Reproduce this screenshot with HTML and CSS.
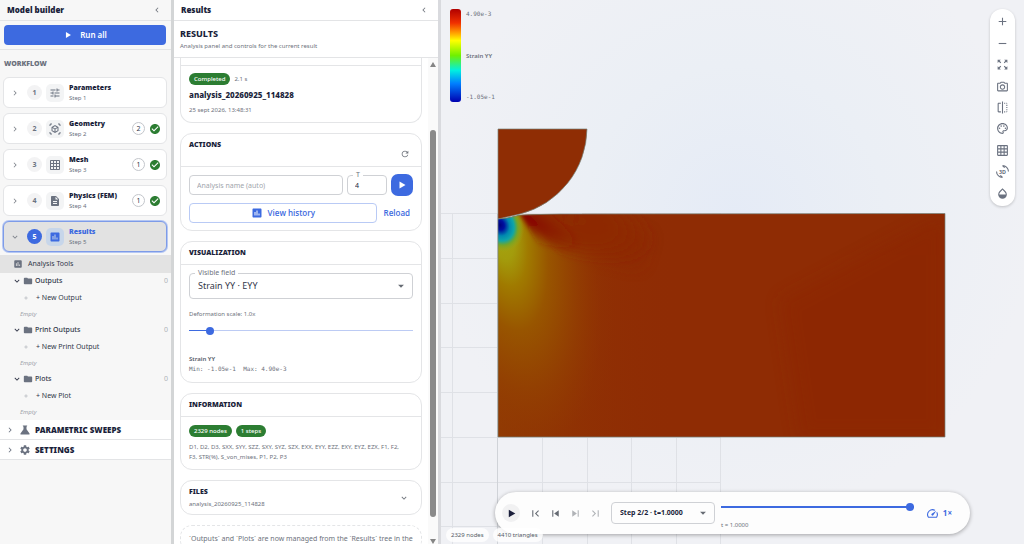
FILE: index.html
```html
<!DOCTYPE html>
<html lang="en">
<head>
<meta charset="utf-8">
<title>Model builder</title>
<link rel="stylesheet" href="styles.css">
</head>
<body>
<svg class="sprite" aria-hidden="true">
<symbol id="play" viewBox="0 0 24 24"><path d="M7 5v14l12-7z"/></symbol>
<symbol id="left" viewBox="0 0 24 24"><path d="M15.4 7.4 14 6l-6 6 6 6 1.4-1.4L10.8 12z"/></symbol>
<symbol id="right" viewBox="0 0 24 24"><path d="M10 6 8.6 7.4l4.6 4.6-4.6 4.6L10 18l6-6z"/></symbol>
<symbol id="down" viewBox="0 0 24 24"><path d="M16.6 8.6 12 13.2 7.4 8.6 6 10l6 6 6-6z"/></symbol>
<symbol id="caret" viewBox="0 0 24 24"><path d="m5 9 7 7 7-7z"/></symbol>
<symbol id="tune" viewBox="0 0 24 24"><path d="M3 17v2h6v-2H3zM3 5v2h10V5H3zm10 16v-2h8v-2h-8v-2h-2v6h2zM7 9v2H3v2h4v2h2V9H7zm14 4v-2H11v2h10zm-6-4h2V7h4V5h-4V3h-2v6z"/></symbol>
<symbol id="cube" viewBox="0 0 24 24"><path d="M3 4c0-.55.45-1 1-1h2V1H4C2.34 1 1 2.34 1 4v2h2V4zm0 16v-2H1v2c0 1.66 1.34 3 3 3h2v-2H4c-.55 0-1-.45-1-1zM20 1h-2v2h2c.55 0 1 .45 1 1v2h2V4c0-1.66-1.34-3-3-3zm1 19c0 .55-.45 1-1 1h-2v2h2c1.66 0 3-1.34 3-3v-2h-2v2zm-2-5.13V9.13c0-.72-.38-1.38-1-1.73l-5-2.88c-.31-.18-.65-.27-1-.27s-.69.09-1 .27L6 7.39c-.62.36-1 1.02-1 1.74v5.74c0 .72.38 1.38 1 1.73l5 2.88c.31.18.65.27 1 .27s.69-.09 1-.27l5-2.88c.62-.35 1-1.01 1-1.73zm-8 2.3l-4-2.3v-4.63l4 2.33v4.6zm1-6.33L8.04 8.53 12 6.25l3.96 2.28L12 10.84zm5 4.03l-4 2.3v-4.6l4-2.33v4.63z"/></symbol>
<symbol id="grid" viewBox="0 0 24 24"><path d="M20 2H4c-1.1 0-2 .9-2 2v16c0 1.1.9 2 2 2h16c1.1 0 2-.9 2-2V4c0-1.1-.9-2-2-2zM8 20H4v-4h4v4zm0-6H4v-4h4v4zm0-6H4V4h4v4zm6 12h-4v-4h4v4zm0-6h-4v-4h4v4zm0-6h-4V4h4v4zm6 12h-4v-4h4v4zm0-6h-4v-4h4v4zm0-6h-4V4h4v4z"/></symbol>
<symbol id="doc" viewBox="0 0 24 24"><path d="M14 2H6c-1.1 0-2 .9-2 2v16c0 1.1.9 2 2 2h12c1.1 0 2-.9 2-2V8l-6-6zm2 16H8v-2h8v2zm0-4H8v-2h8v2zm-3-5V3.5L18.5 9H13z"/></symbol>
<symbol id="chart" viewBox="0 0 24 24"><path d="M19 3H5c-1.1 0-2 .9-2 2v14c0 1.1.9 2 2 2h14c1.1 0 2-.9 2-2V5c0-1.1-.9-2-2-2zM9 17H7v-7h2v7zm4 0h-2V7h2v10zm4 0h-2v-4h2v4z"/></symbol>
<symbol id="check" viewBox="0 0 24 24"><path d="M12 2C6.48 2 2 6.48 2 12s4.48 10 10 10 10-4.48 10-10S17.52 2 12 2zm-2 15l-5-5 1.41-1.41L10 14.17l7.59-7.59L19 8l-9 9z"/></symbol>
<symbol id="folder" viewBox="0 0 24 24"><path d="M10 4H4c-1.1 0-2 .9-2 2v12c0 1.1.9 2 2 2h16c1.1 0 2-.9 2-2V8c0-1.1-.9-2-2-2h-8l-2-2z"/></symbol>
<symbol id="flask" viewBox="0 0 24 24"><path d="M16 3H8c-.5 0-.7.5-.4.8L9 5.5v5.2L3 19c-.6.9 0 2 1 2h16c1 0 1.6-1.1 1-2l-6-8.3V5.5l1.4-1.7c.3-.3.1-.8-.4-.8z"/></symbol>
<symbol id="gear" viewBox="0 0 24 24"><path d="M19.14 12.94c.04-.3.06-.61.06-.94 0-.32-.02-.64-.07-.94l2.03-1.58c.18-.14.23-.41.12-.61l-1.92-3.32c-.12-.22-.37-.29-.59-.22l-2.39.96c-.5-.38-1.03-.7-1.62-.94l-.36-2.54c-.04-.24-.24-.41-.48-.41h-3.84c-.24 0-.43.17-.47.41l-.36 2.54c-.59.24-1.13.57-1.62.94l-2.39-.96c-.22-.08-.47 0-.59.22L2.74 8.87c-.12.21-.08.47.12.61l2.03 1.58c-.05.3-.09.63-.09.94s.02.64.07.94l-2.03 1.58c-.18.14-.23.41-.12.61l1.92 3.32c.12.22.37.29.59.22l2.39-.96c.5.38 1.03.7 1.62.94l.36 2.54c.05.24.24.41.48.41h3.84c.24 0 .44-.17.47-.41l.36-2.54c.59-.24 1.13-.56 1.62-.94l2.39.96c.22.08.47 0 .59-.22l1.92-3.32c.12-.22.07-.47-.12-.61l-2.01-1.58zM12 15.6c-1.98 0-3.6-1.62-3.6-3.6s1.62-3.6 3.6-3.6 3.6 1.62 3.6 3.6-1.62 3.6-3.6 3.6z"/></symbol>
<symbol id="refresh" viewBox="0 0 24 24"><path d="M17.65 6.35C16.2 4.9 14.21 4 12 4c-4.42 0-8 3.58-8 8s3.58 8 8 8c3.73 0 6.84-2.55 7.73-6h-2.08c-.82 2.33-3.04 4-5.65 4-3.31 0-6-2.69-6-6s2.69-6 6-6c1.66 0 3.14.69 4.22 1.78L13 11h7V4l-2.35 2.35z"/></symbol>
<symbol id="plus" viewBox="0 0 24 24"><path d="M19 13h-6v6h-2v-6H5v-2h6V5h2v6h6z"/></symbol>
<symbol id="minus" viewBox="0 0 24 24"><path d="M5 11h14v2H5z"/></symbol>
<symbol id="expand" viewBox="0 0 24 24"><path d="M15 3l2.3 2.3-2.89 2.87 1.42 1.42L18.7 6.7 21 9V3h-6zM3 9l2.3-2.3 2.87 2.89 1.42-1.42L6.7 5.3 9 3H3v6zm6 12l-2.3-2.3 2.89-2.87-1.42-1.42L5.3 17.3 3 15v6h6zm12-6l-2.3 2.3-2.87-2.89-1.42 1.42 2.89 2.87L15 21h6v-6z"/></symbol>
<symbol id="camera" viewBox="0 0 24 24"><path d="M20 5h-3.17L15 3H9L7.17 5H4c-1.1 0-2 .9-2 2v12c0 1.1.9 2 2 2h16c1.1 0 2-.9 2-2V7c0-1.1-.9-2-2-2zm0 14H4V7h4.05l1.83-2h4.24l1.83 2H20v12zM12 8c-2.76 0-5 2.24-5 5s2.24 5 5 5 5-2.24 5-5-2.24-5-5-5zm0 8c-1.65 0-3-1.35-3-3s1.35-3 3-3 3 1.35 3 3-1.35 3-3 3z"/></symbol>
<symbol id="flip" viewBox="0 0 24 24"><path d="M15 21h2v-2h-2v2zm4-12h2V7h-2v2zM3 5v14c0 1.1.9 2 2 2h4v-2H5V5h4V3H5c-1.1 0-2 .9-2 2zm16-2v2h2c0-1.1-.9-2-2-2zm-8 20h2V1h-2v22zm8-6h2v-2h-2v2zM15 5h2V3h-2v2zm4 8h2v-2h-2v2zm0 8c1.1 0 2-.9 2-2h-2v2z"/></symbol>
<symbol id="palette" viewBox="0 0 24 24"><path d="M12 22C6.49 22 2 17.51 2 12S6.49 2 12 2s10 4.04 10 9c0 3.31-2.69 6-6 6h-1.77c-.28 0-.5.22-.5.5 0 .12.05.23.13.33.41.47.64 1.06.64 1.67 0 1.38-1.12 2.5-2.5 2.5zm0-18c-4.41 0-8 3.59-8 8s3.59 8 8 8c.28 0 .5-.22.5-.5 0-.16-.08-.28-.14-.35-.41-.46-.63-1.05-.63-1.65 0-1.38 1.12-2.5 2.5-2.5H16c2.21 0 4-1.79 4-4 0-3.86-3.59-7-8-7z"/><circle cx="6.5" cy="11.5" r="1.5"/><circle cx="9.5" cy="7.5" r="1.5"/><circle cx="14.5" cy="7.5" r="1.5"/><circle cx="17.5" cy="11.5" r="1.5"/></symbol>
<symbol id="drop" viewBox="0 0 24 24"><path d="M17.66 8L12 2.35 6.34 8C4.78 9.56 4 11.64 4 13.64s.78 4.11 2.34 5.67 3.61 2.35 5.66 2.35 4.1-.79 5.66-2.35S20 15.64 20 13.64 19.22 9.56 17.66 8zM6 14c.01-2 .62-3.27 1.76-4.4L12 5.27l4.24 4.38C17.38 10.77 17.99 12 18 14H6z"/></symbol>
<symbol id="first" viewBox="0 0 24 24"><path d="M18.4 16.6 13.8 12l4.6-4.6L17 6l-6 6 6 6zM6 6h2v12H6z"/></symbol>
<symbol id="prev" viewBox="0 0 24 24"><path d="M6 6h2v12H6zm3.5 6 8.5 6V6z"/></symbol>
<symbol id="next" viewBox="0 0 24 24"><path d="m6 18 8.5-6L6 6zM16 6v12h2V6z"/></symbol>
<symbol id="last" viewBox="0 0 24 24"><path d="M5.6 7.4 10.2 12l-4.6 4.6L7 18l6-6-6-6zM16 6h2v12h-2z"/></symbol>
<symbol id="speed" viewBox="0 0 24 24"><path d="M20.38 8.57l-1.23 1.85a8 8 0 0 1-.22 7.58H5.07A8 8 0 0 1 15.58 6.85l1.85-1.23A10 10 0 0 0 3.35 19a2 2 0 0 0 1.72 1h13.85a2 2 0 0 0 1.74-1 10 10 0 0 0-.27-10.44zm-9.79 6.84a2 2 0 0 0 2.83 0l5.66-8.49-8.49 5.66a2 2 0 0 0 0 2.83z"/></symbol>
</svg>

<div class="app">
<aside class="builder">
  <header class="panel-head"><h1>Model builder</h1><button class="plain" aria-label="Collapse builder"><svg class="icon"><use href="#left"/></svg></button></header>
  <div class="run-wrap"><button class="run"><svg class="icon"><use href="#play"/></svg>Run all</button></div>
  <h2 class="caption">WORKFLOW</h2>
  <nav class="steps" aria-label="Workflow">
    <button class="step"><svg class="icon chev"><use href="#right"/></svg><span class="num">1</span><span class="tile"><svg class="icon big"><use href="#tune"/></svg></span><span class="name"><b>Parameters</b><small>Step 1</small></span></button>
    <button class="step"><svg class="icon chev"><use href="#right"/></svg><span class="num">2</span><span class="tile"><svg class="icon big"><use href="#cube"/></svg></span><span class="name"><b>Geometry</b><small>Step 2</small></span><span class="count">2</span><svg class="icon big ok"><use href="#check"/></svg></button>
    <button class="step"><svg class="icon chev"><use href="#right"/></svg><span class="num">3</span><span class="tile"><svg class="icon big"><use href="#grid"/></svg></span><span class="name"><b>Mesh</b><small>Step 3</small></span><span class="count">1</span><svg class="icon big ok"><use href="#check"/></svg></button>
    <button class="step"><svg class="icon chev"><use href="#right"/></svg><span class="num">4</span><span class="tile"><svg class="icon big"><use href="#doc"/></svg></span><span class="name"><b>Physics (FEM)</b><small>Step 4</small></span><span class="count">1</span><svg class="icon big ok"><use href="#check"/></svg></button>
    <button class="step active"><svg class="icon chev"><use href="#down"/></svg><span class="num">5</span><span class="tile"><svg class="icon big"><use href="#chart"/></svg></span><span class="name"><b>Results</b><small>Step 5</small></span></button>
  </nav>
  <div class="tree">
    <button class="tool"><svg class="icon"><use href="#chart"/></svg>Analysis Tools</button>
    <button class="branch"><svg class="icon"><use href="#down"/></svg><svg class="icon fold"><use href="#folder"/></svg><span>Outputs</span><i>0</i></button>
    <button class="leaf"><svg class="icon"><use href="#plus"/></svg>+ New Output</button>
    <p class="empty">Empty</p>
    <button class="branch"><svg class="icon"><use href="#down"/></svg><svg class="icon fold"><use href="#folder"/></svg><span>Print Outputs</span><i>0</i></button>
    <button class="leaf"><svg class="icon"><use href="#plus"/></svg>+ New Print Output</button>
    <p class="empty">Empty</p>
    <button class="branch"><svg class="icon"><use href="#down"/></svg><svg class="icon fold"><use href="#folder"/></svg><span>Plots</span><i>0</i></button>
    <button class="leaf"><svg class="icon"><use href="#plus"/></svg>+ New Plot</button>
    <p class="empty">Empty</p>
  </div>
  <button class="section"><svg class="icon"><use href="#right"/></svg><svg class="icon big"><use href="#flask"/></svg>PARAMETRIC SWEEPS</button>
  <button class="section"><svg class="icon"><use href="#right"/></svg><svg class="icon big"><use href="#gear"/></svg>SETTINGS</button>
</aside>

<section class="results">
  <header class="panel-head"><h1>Results</h1><button class="plain" aria-label="Collapse results"><svg class="icon"><use href="#left"/></svg></button></header>
  <div class="intro"><h2>RESULTS</h2><p>Analysis panel and controls for the current result</p></div>
  <div class="scroller">
    <div class="cards">
      <article class="card summary">
        <div class="body"><div class="chips"><span class="chip">Completed</span><small>2.1 s</small></div>
        <h3>analysis_20260925_114828</h3><p>25 sept 2026, 13:48:31</p></div>
      </article>
      <article class="card actions">
        <header><h3>ACTIONS</h3><button class="plain" aria-label="Refresh"><svg class="icon"><use href="#refresh"/></svg></button></header>
        <div class="body">
          <div class="row"><input class="field" aria-label="Analysis name" placeholder="Analysis name (auto)">
            <div class="outlined threads"><label for="threads">T</label><input id="threads" class="field" value="4"></div>
            <button class="go" aria-label="Run analysis"><svg class="icon big"><use href="#play"/></svg></button></div>
          <div class="row"><button class="history"><svg class="icon big"><use href="#chart"/></svg>View history</button><button class="reload">Reload</button></div>
        </div>
      </article>
      <article class="card visual">
        <header><h3>VISUALIZATION</h3></header>
        <div class="body">
          <div class="outlined"><label for="visible">Visible field</label><select id="visible"><option>Strain YY · EYY</option></select><svg class="icon arrow"><use href="#caret"/></svg></div>
          <label class="scale" for="deform">Deformation scale: 1.0x</label>
          <input id="deform" class="slider deform" type="range" min="0" max="100" value="8">
          <p class="strong">Strain YY</p><p class="mono">Min: -1.05e-1&nbsp; Max: 4.90e-3</p>
        </div>
      </article>
      <article class="card info">
        <header><h3>INFORMATION</h3></header>
        <div class="body"><div class="chips"><span class="chip">2329 nodes</span><span class="chip">1 steps</span></div>
        <p>D1, D2, D3, SXX, SYY, SZZ, SXY, SYZ, SZX, EXX, EYY, EZZ, EXY, EYZ, EZX, F1, F2, F3, STR(%), S_von_mises, P1, P2, P3</p></div>
      </article>
      <article class="card files"><div><h3>FILES</h3><p>analysis_20260925_114828</p></div><button class="plain" aria-label="Show files"><svg class="icon"><use href="#down"/></svg></button></article>
      <article class="card note"><p>`Outputs` and `Plots` are now managed from the `Results` tree in the</p></article>
    </div>
    <div class="scrollbar" aria-hidden="true"><i class="up"></i><i class="thumb"></i><i class="dn"></i></div>
  </div>
</section>

<main class="viewport">
  <svg class="canvas" viewBox="441 0 583 544" preserveAspectRatio="xMinYMin slice" role="img" aria-label="Strain YY on deformed mesh">
    <defs>
      <radialGradient id="sky" gradientUnits="userSpaceOnUse" cx="735" cy="215" r="300"><stop offset="0" stop-color="#e5ebf6"/><stop offset=".5" stop-color="#ebeff5"/><stop offset="1" stop-color="#f0f1f5"/></radialGradient>
      <radialGradient id="plume" gradientUnits="userSpaceOnUse" cx="0" cy="0" r="1" gradientTransform="translate(500 226) rotate(-12) scale(115 280)"><stop offset="0" stop-color="#a5a812"/><stop offset=".12" stop-color="#a39c0c"/><stop offset=".22" stop-color="#a07a00"/><stop offset=".38" stop-color="#985500"/><stop offset=".6" stop-color="#934002" stop-opacity=".85"/><stop offset=".8" stop-color="#903203" stop-opacity=".5"/><stop offset="1" stop-color="#8f2c04" stop-opacity="0"/></radialGradient>
      <radialGradient id="core" gradientUnits="userSpaceOnUse" cx="0" cy="0" r="1" gradientTransform="translate(500 225) rotate(-25) scale(23 28)"><stop offset="0" stop-color="#00007f"/><stop offset=".18" stop-color="#0010a0"/><stop offset=".4" stop-color="#0088b0"/><stop offset=".58" stop-color="#10a5a8"/><stop offset=".74" stop-color="#72a52a"/><stop offset="1" stop-color="#a0a512" stop-opacity="0"/></radialGradient>
      <radialGradient id="hot" gradientUnits="userSpaceOnUse" cx="0" cy="0" r="1" gradientTransform="translate(524 218) rotate(28) scale(66 20)"><stop offset="0" stop-color="#850000"/><stop offset=".3" stop-color="#880a04" stop-opacity=".8"/><stop offset="1" stop-color="#8b1e05" stop-opacity="0"/></radialGradient>
      <linearGradient id="warm" x1="0" x2="1"><stop offset="0" stop-color="#924203"/><stop offset=".3" stop-color="#903403" stop-opacity=".7"/><stop offset=".7" stop-color="#8f2c04" stop-opacity="0"/></linearGradient>
      <radialGradient id="shade" gradientUnits="userSpaceOnUse" cx="0" cy="0" r="1" gradientTransform="translate(570 218) rotate(18) scale(90 40)"><stop offset="0" stop-color="#8e2904"/><stop offset=".5" stop-color="#8e2904" stop-opacity=".9"/><stop offset="1" stop-color="#8e2a04" stop-opacity="0"/></radialGradient>
      <clipPath id="block"><path d="M498 219Q510 218 520 215L560 214 945 213.5V437H498z"/></clipPath>
      <filter id="soft"><feGaussianBlur stdDeviation="8"/></filter>
      <filter id="edge"><feGaussianBlur stdDeviation="2"/></filter>
    </defs>
    <rect x="441" width="2000" height="2000" fill="url(#sky)"/>
    <path class="lines" d="M441 213.5H721M441 258.5H721M441 303.5H721M441 347.5H721M441 392.5H721M441 437.5H721M441 482.5H721M441 526.5H721M452.5 214V544M542.5 214V544M587.5 214V544M631.5 214V544M676.5 214V544M720.5 214V544"/>
    <path class="lines axis" d="M497.5 214V544"/>
    <path d="M498 129H587A89 89 0 0 1 520 214L498 219z" fill="#8f2d04" stroke="#77837a" stroke-width=".7"/>
    <g clip-path="url(#block)">
      <rect x="498" y="213" width="447" height="225" fill="#8f2c04"/>
      <rect x="498" y="213" width="260" height="225" fill="url(#warm)"/>
      <path d="M540 205 650 235 640 268 552 246zM945 213 780 300 800 438H945z" fill="#8c2405" opacity=".4" filter="url(#soft)"/>
      <rect x="498" y="213" width="260" height="225" fill="url(#plume)"/>
      <rect x="498" y="213" width="100" height="60" fill="url(#core)"/>
      <path d="M519 208H700V300H600z" fill="url(#shade)" filter="url(#edge)"/>
      <path d="M519 212H620V300H570z" fill="url(#hot)" filter="url(#edge)"/>
    </g>
    <path d="M498 219Q510 218 520 215L560 214 945 213.5V437H498z" fill="none" stroke="#77837a" stroke-width=".7"/>
  </svg>
  <div class="legend"><i></i><div><span>4.90e-3</span><b>Strain YY</b><span>-1.05e-1</span></div></div>
  <div class="toolbar" role="toolbar" aria-label="View tools">
    <button aria-label="Zoom in"><svg class="icon tool-icon"><use href="#plus"/></svg></button>
    <button aria-label="Zoom out"><svg class="icon tool-icon"><use href="#minus"/></svg></button>
    <button aria-label="Fit"><svg class="icon tool-icon"><use href="#expand"/></svg></button>
    <button aria-label="Capture"><svg class="icon tool-icon"><use href="#camera"/></svg></button>
    <button aria-label="Mirror"><svg class="icon tool-icon"><use href="#flip"/></svg></button>
    <button aria-label="Colours"><svg class="icon tool-icon"><use href="#palette"/></svg></button>
    <button aria-label="Grid"><svg class="icon tool-icon"><use href="#grid"/></svg></button>
    <button aria-label="Rotate"><svg class="icon tool-icon" viewBox="0 0 24 24"><path d="M12 1a11 11 0 0 1 11 11M12 23A11 11 0 0 1 1 12M12 1l4 4M12 23l-4-4" fill="none" stroke="currentColor" stroke-width="2"/><text x="12" y="16" class="glyph3d">3D</text></svg></button>
    <button aria-label="Opacity"><svg class="icon tool-icon"><use href="#drop"/></svg></button>
  </div>
  <div class="player">
    <button class="round" aria-label="Play"><svg class="icon tool-icon"><use href="#play"/></svg></button>
    <div class="skips"><button aria-label="First"><svg class="icon tool-icon"><use href="#first"/></svg></button><button aria-label="Previous"><svg class="icon tool-icon"><use href="#prev"/></svg></button><button aria-label="Next" disabled><svg class="icon tool-icon"><use href="#next"/></svg></button><button aria-label="Last" disabled><svg class="icon tool-icon"><use href="#last"/></svg></button></div>
    <div class="outlined step-pick"><select aria-label="Step"><option>Step 2/2 · t=1.0000</option></select><svg class="icon arrow"><use href="#caret"/></svg></div>
    <div class="timeline"><input id="time" class="slider time" type="range" min="0" max="100" value="100"><label for="time">t = 1.0000</label></div>
    <button class="rate"><svg class="icon tool-icon"><use href="#speed"/></svg>1×</button>
  </div>
  <div class="stats"><span>2329 nodes</span><span>4410 triangles</span></div>
</main>
</div>
</body>
</html>
```
FILE: styles.css
```css
* { box-sizing: border-box; margin: 0; padding: 0; }
body { font: 7px/10px "Noto Sans", "Open Sans", sans-serif; color: #1b1f3b; overflow: hidden; }
button, input, select { font: inherit; color: inherit; background: none; border: 0; min-width: 0; }
button { display: flex; align-items: center; text-align: left; white-space: nowrap; cursor: pointer; }
.sprite { position: absolute; width: 0; height: 0; }
.icon { width: 10px; height: 10px; flex: none; fill: currentColor; }
.big { width: 12px; height: 12px; }
.tool-icon { width: 13px; height: 13px; }
.glyph3d { font: 700 10px "Noto Sans", sans-serif; text-anchor: middle; }
.app { display: grid; grid-template-columns: 174px 267px 1fr; height: 100vh; }

.builder { background: #f7f7f7; border-right: 3px solid #d3d5d6; overflow: hidden; }
.panel-head { display: flex; align-items: center; justify-content: space-between; height: 21px; padding: 0 9px 0 7px; border-bottom: 1px solid #e3e4e6; }
h1 { font-size: 8px; line-height: 12px; font-weight: 900; }
.plain { color: #70757d; }
.run-wrap { padding: 4px 5px 4px 4px; border-bottom: 1px solid #e3e4e6; }
.run { width: 100%; height: 20px; justify-content: center; gap: 7px; color: #fff; background: #3d6ae0; border-radius: 4px; font-size: 8px; font-weight: 600; }
.caption { padding: 9px 4px 8px; font-size: 7px; line-height: 10px; font-weight: 900; color: #6a707c; }
.steps { display: grid; gap: 5px; padding: 0 4px 0 3px; }
.step { height: 31px; padding: 0 5px; border: 1px solid #e4e5e7; border-radius: 6px; background: #fff; color: #6b7280; }
.chev { color: #80858d; margin-right: 7px; margin-left: 1px; }
.num { width: 15px; height: 15px; border-radius: 50%; background: #f3f3f4; text-align: center; line-height: 15px; font-weight: 700; margin-right: 4px; }
.tile { display: grid; place-items: center; width: 18px; height: 18px; border-radius: 5px; background: #f3f4f5; margin-right: 5px; }
.name { flex: 1; display: grid; }
.name b { font-weight: 900; color: #1b1f3b; }
.name small { font-size: 6px; }
.count { width: 13px; height: 13px; border: 1px solid #c3c6cb; border-radius: 50%; text-align: center; line-height: 11px; color: #30354a; margin-right: 4px; }
.ok { color: #2c7d32; }
.active { background: #e2e2e2; border-color: #7d9be8; box-shadow: 0 0 0 1px #b5c7f3; }
.active .num { background: #3d6ae0; color: #fff; }
.active .tile { background: #c7d6ea; color: #3d6ae0; }
.active .name b { color: #3d6ae0; }
.tree { padding-top: 3px; color: #323749; }
.tool, .branch, .leaf { width: 100%; }
.tool { height: 18px; padding-left: 13px; gap: 5px; background: #e3e3e3; }
.tool .icon { color: #6b7280; }
.branch { height: 16px; padding: 0 3px 0 12px; font-weight: 500; gap: 1px; }
.branch span { flex: 1; padding-left: 1px; }
.branch i { font-style: normal; color: #aeb2b8; font-weight: 400; }
.fold { color: #6b7280; }
.leaf { height: 17px; padding-left: 23px; gap: 7px; }
.leaf .icon { width: 6px; height: 6px; color: #9da2aa; }
.empty { height: 16px; line-height: 16px; padding-left: 20px; font-size: 6px; font-style: italic; color: #a0a4ab; }
.section { width: 100%; height: 20px; padding-left: 5px; gap: 4px; background: #fff; border-bottom: 1px solid #e3e4e6; font-weight: 900; font-size: 8px; }
.section .icon { color: #6b7280; }

.results { display: flex; flex-direction: column; min-height: 0; border-right: 3px solid #d9dade; background: #fff; }
.intro { padding: 6px; border-bottom: 1px solid #e3e4e6; }
.intro h2 { font-size: 9px; line-height: 14px; font-weight: 800; }
.results p { font-size: 6px; color: #6d727c; }
.scroller { flex: 1; min-height: 0; display: flex; overflow: hidden; }
.cards { flex: 1; display: flex; flex-direction: column; gap: 10px; padding: 0 6px; }
.card { flex: none; border: 1px solid #e4e5e7; border-radius: 12px; }
.card header { display: flex; justify-content: space-between; padding: 6px 11px 6px 8px; border-bottom: 1px solid #e4e5e7; }
.card h3 { font-size: 7px; line-height: 10px; font-weight: 900; }
.body { padding: 8px; }
.summary { border-top: 0; border-radius: 0 0 12px 12px; padding-top: 7px; }
.summary .body { border-top: 1px solid #e4e5e7; padding: 7px 8px; }
.card.summary h3 { font-size: 8px; line-height: 12px; padding: 4px 0; font-weight: 800; }
.chips { display: flex; gap: 4px; align-items: center; }
.chips small { font-size: 6px; color: #6d727c; }
.chip { padding: 0 5px; border-radius: 6px; background: #2c7d32; color: #fff; font-size: 6px; line-height: 12px; font-weight: 500; }
.actions header { height: 33px; }
.actions header .plain { align-self: flex-end; height: 12px; }
.actions .body { display: grid; gap: 7px; padding: 7px 8px; }
.row { display: flex; align-items: center; gap: 4px; }
.field { height: 20px; width: 100%; border: 1px solid #cfd1d5; border-radius: 4px; padding: 0 7px; }
.field::placeholder { color: #a1a5ac; opacity: 1; }
.outlined { position: relative; }
.outlined label { position: absolute; top: -5px; left: 6px; padding: 0 3px; background: #fff; color: #6d727c; }
.threads { width: 40px; flex: none; }
.go { flex: none; width: 22px; height: 22px; justify-content: center; border-radius: 7px; background: #3d6ae0; color: #fff; }
.history { flex: 1; height: 20px; justify-content: center; gap: 5px; border: 1px solid #b9caf5; border-radius: 4px; color: #3d6ae0; font: 600 8px/10px "Open Sans", sans-serif; }
.reload { color: #3d6ae0; font: 600 8px/10px "Open Sans", sans-serif; padding: 0 3px; }
select { appearance: none; width: 100%; border: 1px solid #cfd1d5; border-radius: 4px; padding: 0 20px 0 8px; }
.visual select { height: 26px; font-size: 9px; color: #323749; }
.arrow { position: absolute; right: 7px; top: calc(50% - 5px); color: #666b73; pointer-events: none; }
.scale { display: block; margin: 10px 0 7px; font-size: 6px; color: #6d727c; }
.slider { appearance: none; display: block; width: 100%; height: 10px; background: linear-gradient(#3d6ae0, #3d6ae0) 0 4px / 100% 2px no-repeat; }
.deform { background: linear-gradient(90deg, #3d6ae0 10%, #bccbf4 10%) 0 4px / 100% 1px no-repeat; }
.slider::-webkit-slider-thumb { appearance: none; width: 8px; height: 8px; border-radius: 50%; background: #3d6ae0; }
.results .strong { font-weight: 600; margin-top: 18px; color: #565c68; }
.results .mono { font: 6px/10px "DejaVu Sans Mono", monospace; }
.info .body { padding: 8px 16px 7px 8px; }
.info .chips { margin-bottom: 5px; }
.files { display: flex; justify-content: space-between; align-items: center; padding: 6px 12px 5px 8px; }
.files p { margin-top: 2px; }
.note { border-style: dashed; padding: 7px 8px; }
.results .note p { font-size: 7px; line-height: 11px; }
.scrollbar { width: 10px; display: flex; flex-direction: column; align-items: center; background: #fafafa; padding-top: 4px; }
.up { border: 3px solid transparent; border-top: 0; border-bottom: 5px solid #858585; }
.thumb { width: 6px; border-radius: 3px; flex: 1; background: #8a8a8a; margin: 63px 0 22px; }
.dn { border: 3px solid transparent; border-bottom: 0; border-top: 5px solid #858585; }

.viewport { position: relative; overflow: hidden; background: #f0f1f5; }
.canvas { position: absolute; width: 100%; height: 100%; }
.lines { fill: none; stroke: #dfe1e6; }
.axis { stroke: #d0d3d8; }
.legend { position: absolute; top: 9px; left: 9px; display: flex; gap: 5px; color: #6d727c; }
.legend i { width: 11px; height: 93px; border-radius: 3px; background: linear-gradient(#b00000, #f03000 15%, #ff9800 25%, #ff0 34%, #70f000 50%, #00f0e0 66%, #0080ff 80%, #0000b0); }
.legend div { display: flex; flex-direction: column; justify-content: space-between; }
.legend span { font: 6px/10px "DejaVu Sans Mono", monospace; }
.legend b { font-size: 6px; font-weight: 600; }
.toolbar { position: absolute; top: 9px; right: 9px; width: 25px; min-height: 197px; padding: 2px 0; display: flex; flex-direction: column; align-items: center; justify-content: space-around; background: #fff; border-radius: 12px; box-shadow: 0 1px 3px #0003; color: #6b7280; }
.player { position: absolute; left: 54px; right: 54px; bottom: 10px; min-height: 42px; padding: 0 18px 0 7px; display: flex; align-items: center; background: #fdfdfd; border-radius: 21px; box-shadow: 0 1px 4px #0005; }
.round { width: 18px; height: 18px; flex: none; justify-content: center; border-radius: 50%; background: #f1f1f2; }
.skips { display: flex; gap: 7px; padding: 0 9px; color: #666b73; }
.skips :disabled { opacity: .5; }
.step-pick { flex: none; width: 104px; }
.step-pick select { height: 22px; font: 700 7px/10px "Noto Sans", sans-serif; }
.timeline { flex: 1; padding: 5px 0 0 6px; }
.timeline label { display: block; margin-top: 8px; font-size: 6px; color: #6d727c; }
.rate { gap: 4px; margin-left: 12px; color: #3d6ae0; font-size: 8px; font-weight: 700; }
.stats { position: absolute; left: 5px; bottom: 2px; display: flex; gap: 4px; font-size: 6px; color: #565c68; }
.stats span { padding: 2px 5px; border-radius: 7px; background: #fffc; }
```
